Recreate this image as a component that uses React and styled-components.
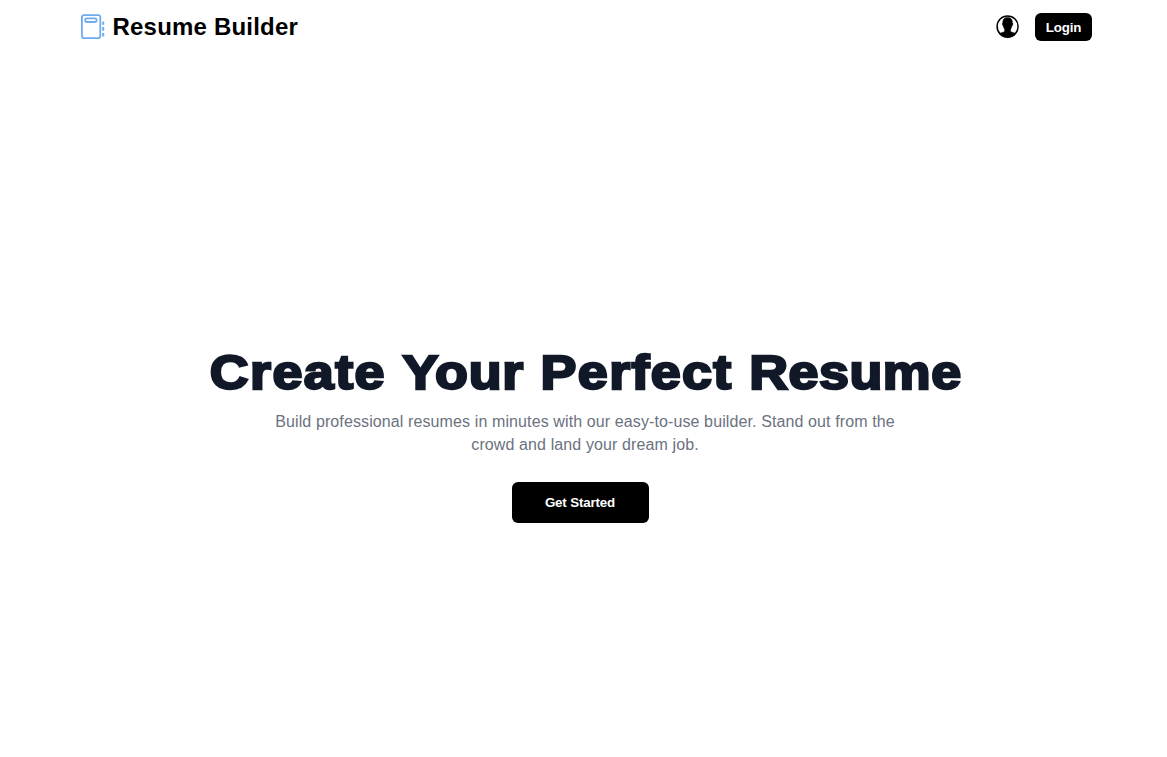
import React from "react";
import styled, { createGlobalStyle } from "styled-components";

const GlobalStyle = createGlobalStyle`
  * { box-sizing: border-box; }
  body {
    margin: 0;
    background: #fff;
    font-family: "Liberation Sans", Arial, sans-serif;
    overflow: hidden;
  }
`;

const Page = styled.div`
  height: 757px;
  display: flex;
  flex-direction: column;
`;

const Header = styled.header`
  height: 54px;
  flex: none;
  padding: 0 75px 0 80px;
  display: flex;
  align-items: center;
  justify-content: space-between;
`;

const Brand = styled.div`
  display: flex;
  align-items: center;
  gap: 6.5px;
`;

const BrandName = styled.span`
  font-size: 24px;
  font-weight: 700;
  line-height: 28px;
  letter-spacing: 0.2px;
  color: #000;
`;

const Actions = styled.div`
  display: flex;
  align-items: center;
  gap: 15px;
`;

const Button = styled.button`
  width: ${(p) => (p.$large ? 137 : 57)}px;
  height: ${(p) => (p.$large ? 41 : 28)}px;
  padding: 0;
  border: 0;
  border-radius: 6px;
  background: #000;
  color: #fff;
  font-family: inherit;
  font-size: 13.333px;
  font-weight: 700;
  letter-spacing: -0.15px;
`;

const Hero = styled.main`
  padding: 291px 0 0 3px;
  display: flex;
  flex-direction: column;
  align-items: center;
`;

const Title = styled.h1`
  margin: 0;
  padding-left: 2px;
  font-size: 48px;
  font-weight: 900;
  line-height: 56px;
  letter-spacing: 1px;
  word-spacing: 0.4px;
  white-space: nowrap;
  color: #111827;
  -webkit-text-stroke: 2.4px #111827;
  transform: scaleX(1.12);
`;

const Word = styled.span`
  letter-spacing: ${(p) => p.$tracking}px;
`;

const Lead = styled.p`
  width: 640px;
  margin: 9px 0 26px;
  font-size: 16px;
  line-height: 23px;
  letter-spacing: 0.11px;
  text-align: center;
  color: #6b7280;
`;

const CallToAction = styled.div`
  padding-right: 10px;
`;

const NotebookIcon = () => (
  <svg width="26" height="28" viewBox="0 0 26 28" fill="none" stroke="#6fabf0" strokeWidth="1.8">
    <rect x="1.9" y="2.1" width="18.4" height="23" rx="2" />
    <rect x="5.2" y="5.4" width="11.4" height="3.6" rx="1.8" />
    <path d="M23.2 8.4v3.4M23.2 14v3.8M23.2 20v3.4" strokeWidth="2" />
  </svg>
);

const UserIcon = () => (
  <svg width="24" height="24" viewBox="0 0 24 24">
    <circle cx="11.6" cy="11.5" r="10.5" fill="#fff" stroke="#000" strokeWidth="1.5" />
    <path
      d="M11.6 2.6c-3.4 0-5 2.2-4.7 5.2-.6.2-.6 1-.4 1.8.2.9.5 1.5 1 1.6.2 1.400.6 2.300 1.200 3v2c-.6 1.200-3.600 1.300-5.300 2.500a10.500 10.500 0 0 0 16.400 0c-1.700-1.200-4.700-1.300-5.300-2.500v-2c.6-.7 1-1.600 1.200-3 .5-.1.800-.7 1-1.600.2-.8.2-1.600-.4-1.800.3-3-1.300-5.200-4.700-5.200z"
      fill="#000"
      stroke="#000"
      strokeWidth="0.6"
    />
  </svg>
);

export default function App() {
  return (
    <Page>
      <GlobalStyle />
      <Header>
        <Brand>
          <NotebookIcon />
          <BrandName>Resume Builder</BrandName>
        </Brand>
        <Actions>
          <UserIcon />
          <Button>Login</Button>
        </Actions>
      </Header>
      <Hero>
        <Title>
          <Word $tracking={1.3}>Create</Word> <Word $tracking={0.7}>Your</Word>{" "}
          <Word $tracking={1.25}>Perfect</Word> <Word $tracking={0.5}>Resume</Word>
        </Title>
        <Lead>
          Build professional resumes in minutes with our easy-to-use builder. Stand out from the
          crowd and land your dream job.
        </Lead>
        <CallToAction>
          <Button $large>Get Started</Button>
        </CallToAction>
      </Hero>
    </Page>
  );
}
